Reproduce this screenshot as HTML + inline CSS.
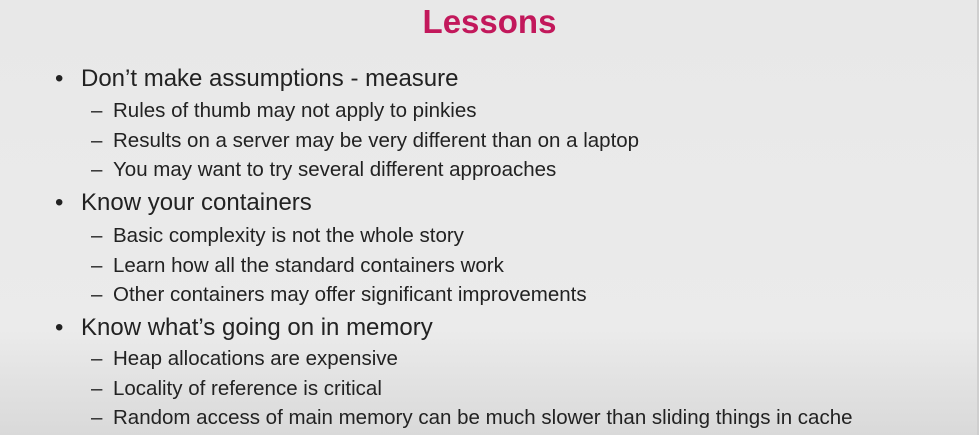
<!DOCTYPE html>
<html><head><style>
body{margin:0;width:979px;height:435px;overflow:hidden;background:linear-gradient(#e8e8e8 0,#ebebeb 330px,#d9d9d9 435px);font-family:"Liberation Sans",sans-serif;color:#222;position:relative}
.r{position:absolute;right:0;top:0;width:2px;height:435px;background:#cfcfcf}
.t{position:absolute;left:0;width:979px;text-align:center;top:2px;font-size:33px;font-weight:bold;color:#c2185b;line-height:40px}
.l1,.l2{position:absolute;white-space:nowrap;line-height:26px;height:26px}
.l1{font-size:24px;left:81px}
.l1:before{content:"•";position:absolute;left:-26px}
.l2{font-size:20.5px;left:113px}
.l2:before{content:"–";position:absolute;left:-22px}
</style></head><body>
<div class="r"></div>
<div class="t">Lessons</div>
<div class="l1" style="top:66px">Don’t make assumptions - measure</div>
<div class="l2" style="top:98px">Rules of thumb may not apply to pinkies</div>
<div class="l2" style="top:128px">Results on a server may be very different than on a laptop</div>
<div class="l2" style="top:157px">You may want to try several different approaches</div>
<div class="l1" style="top:190px">Know your containers</div>
<div class="l2" style="top:223px">Basic complexity is not the whole story</div>
<div class="l2" style="top:253px">Learn how all the standard containers work</div>
<div class="l2" style="top:282px">Other containers may offer significant improvements</div>
<div class="l1" style="top:315px">Know what’s going on in memory</div>
<div class="l2" style="top:346px">Heap allocations are expensive</div>
<div class="l2" style="top:376px">Locality of reference is critical</div>
<div class="l2" style="top:405px">Random access of main memory can be much slower than sliding things in cache</div>
</body></html>
